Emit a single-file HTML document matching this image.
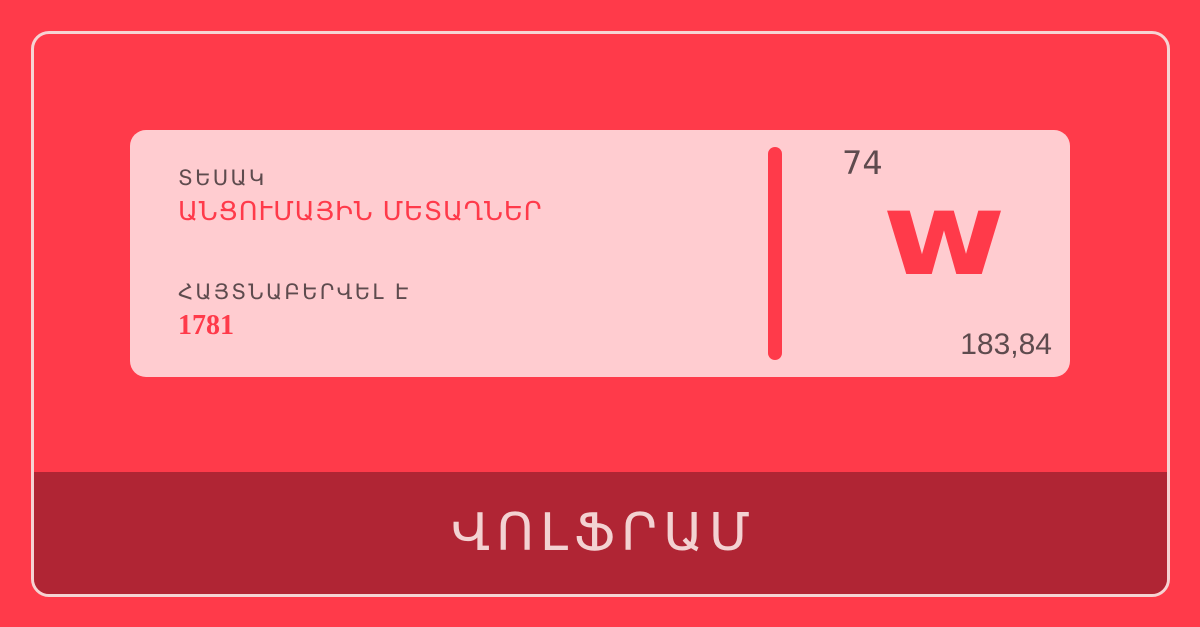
<!DOCTYPE html>
<html><head><meta charset="utf-8"><style>
body{margin:0;width:1200px;height:627px;background:#ff3a4a;position:relative;overflow:hidden;font-family:"DejaVu Sans","Liberation Sans",sans-serif}
.frame{position:absolute;left:31px;top:31px;width:1133px;height:560px;border:3px solid #f6d3d3;border-radius:18px;overflow:hidden}
.band{position:absolute;left:0;right:0;bottom:0;height:122px;background:#b02534;color:#f3d2d2;text-align:center;font-size:52px;line-height:122px;letter-spacing:6px;padding-left:6px}
.card{position:absolute;left:130px;top:130px;width:940px;height:247px;background:#ffccd0;border-radius:16px}
.t{position:absolute;left:48px;white-space:nowrap}
.g{color:#5e4b4e;font-size:21px;letter-spacing:2.3px}
.r{color:#ff3a4a;font-size:26px;letter-spacing:0.8px}
.bar{position:absolute;left:638px;top:17px;width:14px;height:213px;background:#ff3a4a;border-radius:7px}
</style></head><body>
<div class="frame"><div class="band">ՎՈԼՖՐԱՄ</div></div>
<div class="card">
<div class="t g" style="top:36px">ՏԵՍԱԿ</div>
<div class="t r" style="top:67px">ԱՆՑՈՒՄԱՅԻՆ ՄԵՏԱՂՆԵՐ</div>
<div class="t g" style="top:150px">ՀԱՅՏՆԱԲԵՐՎԵԼ Է</div>
<div class="t" style="top:180px;color:#ff3a4a;font:bold 28px 'Liberation Serif',serif">1781</div>
<div class="bar"></div>
<div style="position:absolute;left:712px;top:14px;font-size:32px;color:#5e4b4e">74</div>
<div style="position:absolute;left:744px;top:40px;width:140px;text-align:center;font-size:116px;font-weight:bold;color:#ff3a4a;line-height:130px;transform:scaleX(1.15)">w</div>
<div style="position:absolute;right:18px;top:198px;font-size:30px;color:#5e4b4e;font-family:'Liberation Sans',sans-serif">183,84</div>
</div>
</body></html>
